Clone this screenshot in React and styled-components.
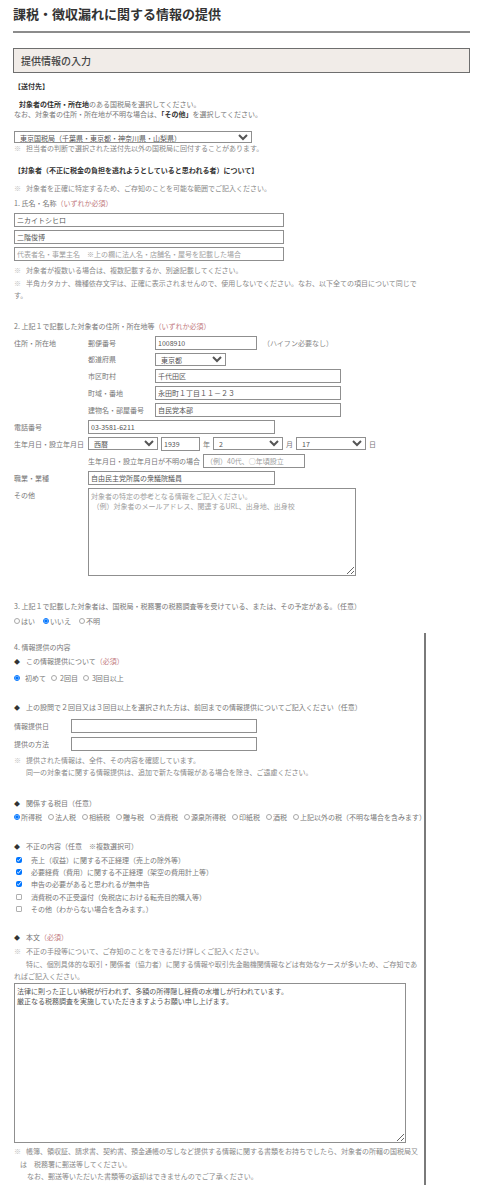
import React from 'react';
import styled, { createGlobalStyle } from 'styled-components';

// ----- style -----

const GlobalStyle = createGlobalStyle`
  * { box-sizing: border-box; }
  body {
    margin: 0;
    background: #fff;
    color: #777;
    font-family: "Noto Sans CJK JP", "Noto Sans", sans-serif;
  }
`;

const Page = styled.div`
  padding: 5px 9px 20px 13px;
  font-size: 7px;
  line-height: 12px;
`;

const Title = styled.h1`
  margin: 0;
  padding-bottom: 8px;
  border-bottom: 2px solid #8c8c8c;
  font-size: 13px;
  line-height: 18px;
  font-weight: bold;
  color: #333;
`;

const SectionBox = styled.h2`
  display: flex;
  align-items: center;
  height: 25px;
  margin: 15px 0 0;
  padding-left: 7px;
  border: 1px solid #6e6e6e;
  background: #f1ece8;
  font-size: 10px;
  font-weight: 500;
  color: #444;
`;

const Column = styled.div`
  width: 411px;
  padding-left: 1px;
`;

const Heading = styled.div`
  margin-top: ${p => p.$mt || 0}px;
  font-size: 7px;
  font-weight: bold;
  color: #333;
`;

const Para = styled.p`
  margin: ${p => p.$mt || 0}px 0 0;
  padding-left: ${p => p.$indent || 0}px;
  line-height: ${p => p.$lh || 12}px;
`;

const Strong = styled.b`
  color: #333;
`;

const Note = styled.p`
  margin: ${p => p.$mt || 0}px 0 0;
  padding-left: ${p => p.$hang || 0}px;
  text-indent: ${p => -(p.$hang || 0)}px;
  line-height: ${p => p.$lh || 12.4}px;
  color: #888;
`;

const Mark = styled.span`
  display: inline-block;
  width: 12px;
  text-indent: 0;
  color: #bbb;
`;

const Indent = styled.span`
  display: inline-block;
  width: ${p => p.$w || 12}px;
`;

const Req = styled.span`
  color: #c27a80;
`;

const Question = styled.div`
  margin-top: ${p => p.$mt || 0}px;
  color: #777;
`;

const Bullet = styled.span`
  display: inline-block;
  width: 12px;
  font-size: 6px;
  color: #333;
`;

const Field = styled.input`
  display: block;
  flex: none;
  width: ${p => p.$w}px;
  height: 14px;
  margin: 0;
  padding: 0 2px;
  border: 1px solid #8f8f8f;
  border-radius: 0;
  background: #fff;
  font-family: inherit;
  font-size: 7px;
  color: #555;
  &::placeholder { color: #a0a0a0; }
`;

const Select = styled.select`
  display: block;
  flex: none;
  width: ${p => p.$w}px;
  height: ${p => p.$h || 13}px;
  margin: 0;
  padding: 0 1px;
  border: 1px solid #8f8f8f;
  border-radius: 0;
  background: #fff;
  font-family: inherit;
  font-size: 7px;
  color: #555;
`;

const SelectBlock = styled.div`
  margin-top: ${p => p.$mt || 0}px;
  height: ${p => p.$h || 12}px;
`;

const Area = styled.textarea`
  display: block;
  width: ${p => p.$w}px;
  height: ${p => p.$h}px;
  margin: ${p => p.$mt || 0}px 0 0;
  padding: 2px 2px;
  border: 1px solid #8f8f8f;
  border-radius: 0;
  font-family: inherit;
  font-size: 7px;
  line-height: 10px;
  color: #555;
  &::placeholder { color: #a0a0a0; }
`;

const Stack = styled.div`
  display: flex;
  flex-direction: column;
  gap: 3px;
  margin-top: ${p => p.$mt || 0}px;
`;

const FormGrid = styled.div`
  display: grid;
  grid-template-columns: ${p => p.$label}px 1fr;
  row-gap: ${p => p.$gap || 3}px;
  align-items: center;
  margin-top: ${p => p.$mt || 0}px;
`;

const Label = styled.div`
  align-self: ${p => (p.$top ? 'start' : 'center')};
  line-height: ${p => (p.$top ? '14px' : '12px')};
  color: #777;
  white-space: nowrap;
`;

const Inline = styled.div`
  display: flex;
  align-items: center;
  gap: ${p => p.$gap || 3}px;
  white-space: nowrap;
`;

const Hint = styled.span`
  margin-left: 3px;
  color: #888;
`;

const ChoiceRow = styled.div`
  display: flex;
  align-items: center;
  gap: ${p => p.$gap || 8}px;
  margin-top: ${p => p.$mt || 0}px;
  white-space: nowrap;
  line-height: 12px;
`;

const Choice = styled.label`
  display: inline-flex;
  align-items: center;
  gap: ${p => p.$gap || 1}px;
  color: #777;
`;

const Radio = styled.input.attrs({ type: 'radio' })`
  flex: none;
  width: 6px;
  height: 6px;
  margin: 0;
  &:not(:checked) {
    appearance: none;
    border: 1px solid #a8a8a8;
    border-radius: 50%;
    background: #fff;
  }
`;

const Check = styled.input.attrs({ type: 'checkbox' })`
  flex: none;
  width: 6px;
  height: 6px;
  margin: 0;
  &:not(:checked) {
    appearance: none;
    border: 1px solid #b0b0b0;
    border-radius: 1px;
    background: #fff;
  }
`;

const CheckList = styled.div`
  display: flex;
  flex-direction: column;
  margin-top: ${p => p.$mt || 0}px;
`;

const CheckItem = styled.label`
  display: flex;
  align-items: center;
  gap: 9px;
  height: 12.3px;
  padding-left: 2px;
`;

const ContentBox = styled.div`
  margin: 6px -2px 0 0;
  padding: 8px 0 2px;
  border-right: 2px solid #7a7a7a;
`;

// ----- component -----

const taxes = ['所得税', '法人税', '相続税', '贈与税', '消費税', '源泉所得税', '印紙税', '酒税', '上記以外の税（不明な場合を含みます）'];

const frauds = [
  { text: '売上（収益）に関する不正経理（売上の除外等）', checked: true },
  { text: '必要経費（費用）に関する不正経理（架空の費用計上等）', checked: true },
  { text: '申告の必要があると思われるが無申告', checked: true },
  { text: '消費税の不正受還付（免税店における転売目的購入等）', checked: false },
  { text: 'その他（わからない場合を含みます。）', checked: false },
];

export default function App() {
  return (
    <>
      <GlobalStyle />
      <Page>
        <Title>課税・徴収漏れに関する情報の提供</Title>
        <SectionBox>提供情報の入力</SectionBox>

        <Column>
          <Heading $mt={7}>【送付先】</Heading>
          <Para $mt={7} $lh={10} $indent={5}>
            <Strong>対象者の住所・所在地</Strong>のある国税局を選択してください。
          </Para>
          <Para $lh={10}>
            なお、対象者の住所・所在地が不明な場合は、<Strong>「その他」</Strong>を選択してください。
          </Para>
          <SelectBlock $mt={12} $h={12}>
            <Select $w={238} $h={12} defaultValue="tokyo">
              <option value="tokyo">東京国税局（千葉県・東京都・神奈川県・山梨県）</option>
            </Select>
          </SelectBlock>
          <Note $lh={11}><Mark>※</Mark>担当者の判断で選択された送付先以外の国税局に回付することがあります。</Note>

          <Heading $mt={10}>【対象者（不正に税金の負担を逃れようとしていると思われる者）について】</Heading>
          <Note $mt={6}><Mark>※</Mark>対象者を正確に特定するため、ご存知のことを可能な範囲でご記入ください。</Note>
          <Question $mt={3}>1. 氏名・名称<Req>（いずれか必須）</Req></Question>
          <Stack $mt={4}>
            <Field $w={270} defaultValue="ニカイトシヒロ" />
            <Field $w={270} defaultValue="二階俊博" />
            <Field $w={270} placeholder="代表者名・事業主名　※上の欄に法人名・店舗名・屋号を記載した場合" />
          </Stack>
          <Note $mt={3}><Mark>※</Mark>対象者が複数いる場合は、複数記載するか、別途記載してください。</Note>
          <Note><Mark>※</Mark>半角カタカナ、機種依存文字は、正確に表示されませんので、使用しないでください。なお、以下全ての項目について同じです。</Note>

          <Question $mt={18}>2. 上記１で記載した対象者の住所・所在地等<Req>（いずれか必須）</Req></Question>
          <FormGrid $label={74} $mt={4}>
            <Label $top>住所・所在地</Label>
            <FormGrid $label={67}>
              <Label>郵便番号</Label>
              <Inline>
                <Field $w={102} defaultValue="1008910" />
                <Hint>（ハイフン必要なし）</Hint>
              </Inline>
              <Label>都道府県</Label>
              <Select $w={71} defaultValue="tokyo">
                <option value="tokyo">東京都</option>
              </Select>
              <Label>市区町村</Label>
              <Field $w={186} defaultValue="千代田区" />
              <Label>町域・番地</Label>
              <Field $w={186} defaultValue="永田町１丁目１１－２３" />
              <Label>建物名・部屋番号</Label>
              <Field $w={186} defaultValue="自民党本部" />
            </FormGrid>

            <Label>電話番号</Label>
            <Field $w={187} defaultValue="03-3581-6211" />

            <Label>生年月日・設立年月日</Label>
            <Inline>
              <Select $w={70} defaultValue="ad">
                <option value="ad">西暦</option>
              </Select>
              <Field $w={39} defaultValue="1939" />
              <span>年</span>
              <Select $w={70} defaultValue="2">
                <option value="2">2</option>
              </Select>
              <span>月</span>
              <Select $w={70} defaultValue="17">
                <option value="17">17</option>
              </Select>
              <span>日</span>
            </Inline>

            <span />
            <Inline>
              <span>生年月日・設立年月日が不明の場合</span>
              <Field $w={102} placeholder="（例）40代、○年頃設立" />
            </Inline>

            <Label>職業・業種</Label>
            <Field $w={187} defaultValue="自由民主党所属の衆議院議員" />

            <Label $top>その他</Label>
            <Area
              $w={268}
              $h={88}
              placeholder={'対象者の特定の参考となる情報をご記入ください。\n （例）対象者のメールアドレス、関連するURL、出身地、出身校'}
            />
          </FormGrid>

          <Question $mt={24}>3. 上記１で記載した対象者は、国税局・税務署の税務調査等を受けている、または、その予定がある。（任意）</Question>
          <ChoiceRow $mt={3}>
            <Choice><Radio name="q3" />はい</Choice>
            <Choice><Radio name="q3" defaultChecked />いいえ</Choice>
            <Choice><Radio name="q3" />不明</Choice>
          </ChoiceRow>

          <ContentBox>
            <Question>4. 情報提供の内容</Question>
            <Question $mt={2}><Bullet>◆</Bullet>この情報提供について<Req>（必須）</Req></Question>
            <ChoiceRow $mt={4} $gap={5}>
              <Choice $gap={5}><Radio name="times" defaultChecked />初めて</Choice>
              <Choice $gap={3}><Radio name="times" />2回目</Choice>
              <Choice $gap={3}><Radio name="times" />3回目以上</Choice>
            </ChoiceRow>

            <Question $mt={17}><Bullet>◆</Bullet>上の設問で２回目又は３回目以上を選択された方は、前回までの情報提供についてご記入ください（任意）</Question>
            <FormGrid $label={57} $gap={4} $mt={5}>
              <Label>情報提供日</Label>
              <Field $w={186} />
              <Label>提供の方法</Label>
              <Field $w={186} />
            </FormGrid>
            <Note $mt={3} $lh={12}>
              <Mark>※</Mark>提供された情報は、全件、その内容を確認しています。<br />
              <Indent />同一の対象者に関する情報提供は、追加で新たな情報がある場合を除き、ご遠慮ください。
            </Note>

            <Question $mt={19}><Bullet>◆</Bullet>関係する税目（任意）</Question>
            <ChoiceRow $mt={1} $gap={6}>
              {taxes.map((tax, i) => (
                <Choice key={tax}><Radio name="tax" defaultChecked={i === 0} />{tax}</Choice>
              ))}
            </ChoiceRow>

            <Question $mt={17}><Bullet>◆</Bullet>不正の内容（任意　※複数選択可）</Question>
            <CheckList $mt={1}>
              {frauds.map(f => (
                <CheckItem key={f.text}><Check defaultChecked={f.checked} />{f.text}</CheckItem>
              ))}
            </CheckList>

            <Question $mt={16}><Bullet>◆</Bullet>本文<Req>（必須）</Req></Question>
            <Note $mt={1}>
              <Mark>※</Mark>不正の手段等について、ご存知のことをできるだけ詳しくご記入ください。<br />
              <Indent />特に、個別具体的な取引・関係者（協力者）に関する情報や取引先金融機関情報などは有効なケースが多いため、ご存知であればご記入ください。
            </Note>
            <Area
              $w={392}
              $h={160}
              $mt={1}
              defaultValue={'法律に則った正しい納税が行われず、多額の所得隠し経費の水増しが行われています。\n厳正なる税務調査を実施していただきますようお願い申し上げます。'}
            />
            <Note $mt={2} $hang={6}>
              <Mark>※</Mark>帳簿、領収証、請求書、契約書、預金通帳の写しなど提供する情報に関する書類をお持ちでしたら、対象者の所轄の国税局又は　税務署に郵送等してください。<br />
              <Indent $w={7} />なお、郵送等いただいた書類等の返却はできませんのでご了承ください。
            </Note>
          </ContentBox>
        </Column>
      </Page>
    </>
  );
}
